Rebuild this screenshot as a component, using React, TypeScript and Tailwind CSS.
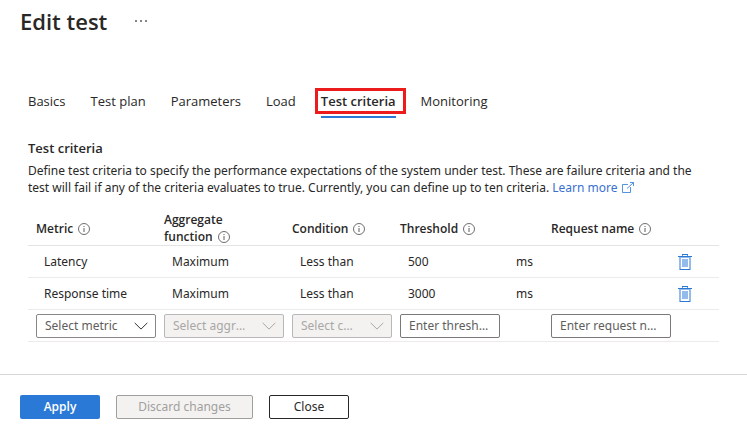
import { useState } from "react";
import type { ReactNode } from "react";

const tabs = ["Basics", "Test plan", "Parameters", "Load", "Test criteria", "Monitoring"];

const criteria = [
  { metric: "Latency", aggregate: "Maximum", condition: "Less than", threshold: "500", unit: "ms" },
  { metric: "Response time", aggregate: "Maximum", condition: "Less than", threshold: "3000", unit: "ms" },
];

function InfoIcon() {
  return (
    <svg className="ml-[5px] inline-block size-3 shrink-0 align-[-2px]" viewBox="0 0 12 12" fill="none" aria-hidden="true">
      <circle cx="6" cy="6" r="5.5" stroke="#605e5c" strokeWidth="0.9" />
      <path d="M6 5v4M6 3v1" stroke="#605e5c" strokeWidth="1" />
    </svg>
  );
}

function ExternalIcon() {
  return (
    <svg className="ml-1 inline-block h-[11px] w-3 align-[-1px]" viewBox="0 0 12 11" fill="none" stroke="#2a79d7" strokeWidth="0.8" aria-hidden="true">
      <path d="M6 2.5H.5v8h8V5M5 6.500l6.500-6M8 .5h3.500v3.500" />
    </svg>
  );
}

function TrashIcon() {
  return (
    <svg className="h-4 w-3.5" viewBox="0 0 14 16" aria-hidden="true">
      <path d="M1 3h12v13H1z" fill="#93bbeb" />
      <path d="M3 4h8v11H3z" fill="#fff" />
      <path d="M4 5h6v8H4z" fill="#93bbeb" />
      <path d="M0 2h14v1H0zM2 15h10v1H2zM4 0h6v1H4z" fill="#2a79d7" />
      <path d="M4 1h1v1H4zM9 1h1v1H9z" fill="#5e9be2" />
    </svg>
  );
}

function Chevron({ className }: { className: string }) {
  return (
    <svg className={`pointer-events-none absolute top-2 right-2 h-2 w-3.5 ${className}`} viewBox="0 0 14 8" fill="none" stroke="currentColor" strokeWidth="1" aria-hidden="true">
      <path d="M.7.9 7 7.1l6.300-6.200" />
    </svg>
  );
}

function Dropdown({ label, placeholder, disabled = false }: { label: string; placeholder: string; disabled?: boolean }) {
  return (
    <div className="relative">
      <select
        aria-label={label}
        disabled={disabled}
        className="block h-6 w-full appearance-none truncate rounded-xs border border-[#8a8886] bg-white pr-9 pl-2 text-[#605e5c] opacity-100 disabled:border-[#b9b8b7] disabled:bg-[#f3f2f1] disabled:text-[#a9a7a5]"
      >
        <option>{placeholder}</option>
      </select>
      <Chevron className={disabled ? "text-[#a9a7a5]" : "text-[#323130]"} />
    </div>
  );
}

function TextBox({ label, placeholder }: { label: string; placeholder: string }) {
  return (
    <input
      type="text"
      aria-label={label}
      placeholder={placeholder}
      className="block h-6 w-full rounded-xs border border-[#7b7977] bg-white px-2 text-ellipsis placeholder:text-[#605e5c]"
    />
  );
}

function HeaderCell({ children }: { children: ReactNode }) {
  return (
    <th scope="col" className="pt-1 pr-3 pl-2 text-left align-middle font-['Open_Sans',sans-serif] leading-[17px] font-semibold">
      {children}
      <InfoIcon />
    </th>
  );
}

export default function App() {
  const [active, setActive] = useState("Test criteria");

  return (
    <div className="font-['Noto_Sans','Open_Sans',sans-serif] text-[12px] leading-[18px] text-[#292827]">
      <header className="flex items-center gap-[26px] px-5 pt-[3px]">
        <h1 className="font-['Open_Sans',sans-serif] text-[22px] leading-9 font-semibold">Edit test</h1>
        <button type="button" aria-label="More options" className="flex gap-[3px] p-0.5">
          <span className="size-0.5 bg-[#868482]" />
          <span className="size-0.5 bg-[#868482]" />
          <span className="size-0.5 bg-[#868482]" />
        </button>
      </header>

      <main className="px-7">
        <div role="tablist" className="flex gap-[25px] pt-[45px] font-['Open_Sans',sans-serif]">
          {tabs.map((tab) => (
            <button
              key={tab}
              type="button"
              role="tab"
              aria-selected={tab === active}
              onClick={() => setActive(tab)}
              className={`relative h-[34px] border-b-2 pt-0.5 text-[13px] ${tab === active ? "border-[#2a79d7] font-semibold" : "border-transparent"}`}
            >
              {tab}
              {tab === "Test criteria" && (
                <span className="pointer-events-none absolute top-1 -right-2.5 -left-1.5 h-[26px] border-3 border-[#ed1c1c]" />
              )}
            </button>
          ))}
        </div>

        <h2 className="mt-[21px] font-['Open_Sans',sans-serif] text-[13px] font-semibold">Test criteria</h2>
        <p className="mt-[5px] pr-4 leading-[17px]">
          Define test criteria to specify the performance expectations of the system under test. These are failure criteria and the
          test will fail if any of the criteria evaluates to true. Currently, you can define up to ten criteria.{" "}
          <a href="#learn-more" className="text-[#3a70d0]">
            Learn more
            <ExternalIcon />
          </a>
        </p>

        <table className="mt-[11px] w-full table-fixed border-collapse">
          <colgroup>
            <col className="w-32" />
            <col className="w-32" />
            <col className="w-27" />
            <col className="w-27" />
            <col className="w-[43px]" />
            <col className="w-32" />
            <col />
          </colgroup>
          <thead>
            <tr className="border-b border-[#e4e3e1]">
              <HeaderCell>Metric</HeaderCell>
              <HeaderCell>Aggregate function</HeaderCell>
              <HeaderCell>Condition</HeaderCell>
              <HeaderCell>Threshold</HeaderCell>
              <td />
              <HeaderCell>Request name</HeaderCell>
              <td />
            </tr>
          </thead>
          <tbody>
            {criteria.map((row) => (
              <tr key={row.metric} className="h-8 border-b border-[#edebe9]">
                <td className="pl-4">{row.metric}</td>
                <td className="pl-4">{row.aggregate}</td>
                <td className="pl-4">{row.condition}</td>
                <td className="pl-4">{row.threshold}</td>
                <td className="pl-4">{row.unit}</td>
                <td />
                <td className="pl-[7px]">
                  <button type="button" aria-label={`Delete ${row.metric}`} className="block">
                    <TrashIcon />
                  </button>
                </td>
              </tr>
            ))}
            <tr className="h-8 border-b border-[#edebe9]">
              <td className="pl-2"><Dropdown label="Metric" placeholder="Select metric" /></td>
              <td className="pl-2"><Dropdown label="Aggregate function" placeholder="Select aggregate function" disabled /></td>
              <td className="pl-2"><Dropdown label="Condition" placeholder="Select condition" disabled /></td>
              <td className="pl-2"><TextBox label="Threshold" placeholder="Enter threshold" /></td>
              <td />
              <td className="pl-2"><TextBox label="Request name" placeholder="Enter request name" /></td>
              <td />
            </tr>
          </tbody>
        </table>
      </main>

      <footer className="mt-8 flex gap-4 border-t border-[#d8d7d6] px-5 pt-5">
        <button type="button" className="h-6 w-20 rounded-xs bg-[#2a79d7] font-['Open_Sans',sans-serif] font-semibold text-white">Apply</button>
        <button type="button" disabled className="h-6 w-[137px] rounded-xs border border-[#a19f9d] bg-[#f3f2f1] text-[#a19f9d]">Discard changes</button>
        <button type="button" className="h-6 w-20 rounded-xs border border-[#292827] bg-white">Close</button>
      </footer>
    </div>
  );
}
